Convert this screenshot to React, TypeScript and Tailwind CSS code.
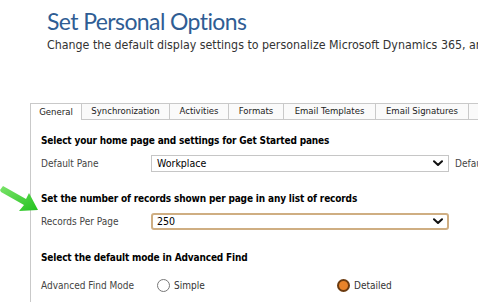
import React from "react";

const tabs = ["General", "Synchronization", "Activities", "Formats", "Email Templates", "Email Signatures", ""];
const tabWidths = [52, 88, 59, 55, 92, 93, 20];

function Chevron() {
  return (
    <svg width="10" height="7" viewBox="0 0 10 7" className="block">
      <path d="M1 1.2 L5 5 L9 1.2" fill="none" stroke="#111" strokeWidth="2" strokeLinecap="round" strokeLinejoin="round" />
    </svg>
  );
}

export default function App() {
  return (
    <div
      className="relative w-[478px] h-[302px] overflow-hidden bg-white text-[#222]"
      style={{ fontFamily: "'DejaVu Sans Condensed', 'DejaVu Sans', Verdana, sans-serif" }}
    >
      <div className="pl-[47px] pt-[7px]">
        <div className="text-[23px] leading-[28px] tracking-[-0.6px] text-[#2f5d94]" style={{ fontFamily: "Lato, 'Noto Sans', sans-serif" }}>
          Set Personal Options
        </div>
        <div className="text-[12.3px] leading-[16px] text-[#333] whitespace-nowrap mt-[2px]">
          Change the default display settings to personalize Microsoft Dynamics 365, and
        </div>
      </div>

      <div className="mt-[50px] ml-[30px]">
        <div className="flex h-[17px]">
          {tabs.map((t, i) => (
            <div
              key={i}
              style={{ width: tabWidths[i] }}
              className={
                "shrink-0 flex items-center justify-center text-[9.5px] text-[#222] border-t border-r border-[#c9c9c9] whitespace-nowrap " +
                (i === 0 ? "border-l bg-white" : "border-b bg-[#fafafa]")
              }
            >
              {t}
            </div>
          ))}
          <div className="flex-1 border-b border-[#c9c9c9]" />
        </div>

        <div className="border-l border-[#c9c9c9] pl-[10px] pt-[14px] h-[200px]">
          <div className="text-[10px] font-bold leading-[14px] tracking-[-0.15px] text-black whitespace-nowrap">
            Select your home page and settings for Get Started panes
          </div>
          <div className="flex items-center mt-[7px] h-[17px]">
            <div className="w-[110px] shrink-0 text-[10px] text-[#444]">Default Pane</div>
            <div className="w-[298px] shrink-0 h-[17px] border border-[#c6c6c6] flex items-center justify-between pl-[5px] pr-[5px] text-[10.5px] text-black">
              <span>Workplace</span>
              <Chevron />
            </div>
            <div className="ml-[6px] shrink-0 text-[10px] text-[#444] whitespace-nowrap">Default</div>
          </div>

          <div className="text-[10px] font-bold leading-[14px] tracking-[-0.15px] text-black mt-[20px] whitespace-nowrap">
            Set the number of records shown per page in any list of records
          </div>
          <div className="flex items-center mt-[7px] h-[17px]">
            <div className="w-[110px] shrink-0 text-[10px] text-[#444]">Records Per Page</div>
            <div className="w-[298px] shrink-0 h-[17px] border-2 border-[#cfae82] rounded-[3px] flex items-center justify-between pl-[4px] pr-[4px] text-[10.5px] text-black">
              <span>250</span>
              <Chevron />
            </div>
          </div>

          <div className="text-[10px] font-bold leading-[14px] tracking-[-0.15px] text-black mt-[21px] whitespace-nowrap">
            Select the default mode in Advanced Find
          </div>
          <div className="flex items-center mt-[12px] h-[16px]">
            <div className="w-[116px] shrink-0 text-[10px] text-[#444] whitespace-nowrap">Advanced Find Mode</div>
            <div className="w-[13px] h-[13px] shrink-0 rounded-full border border-[#777] bg-white" />
            <div className="ml-[4px] w-[163px] shrink-0 text-[10px] text-[#333]">Simple</div>
            <div className="w-[13px] h-[13px] shrink-0 rounded-full border-[2px] border-[#6b3b10] bg-[#e8832a]" />
            <div className="ml-[4px] text-[10px] text-[#333]">Detailed</div>
          </div>
        </div>
      </div>

      <svg className="absolute left-0 top-[183px]" width="42" height="32" viewBox="0 0 42 32">
        <defs>
          <linearGradient id="g" x1="0" y1="0" x2="1" y2="1">
            <stop offset="0" stopColor="#7be36a" />
            <stop offset="1" stopColor="#22c21e" />
          </linearGradient>
        </defs>
        <polygon points="0,7 3,3 26,16 29,10 38,27 19,28 24,22 1,9" fill="url(#g)" />
      </svg>
    </div>
  );
}
